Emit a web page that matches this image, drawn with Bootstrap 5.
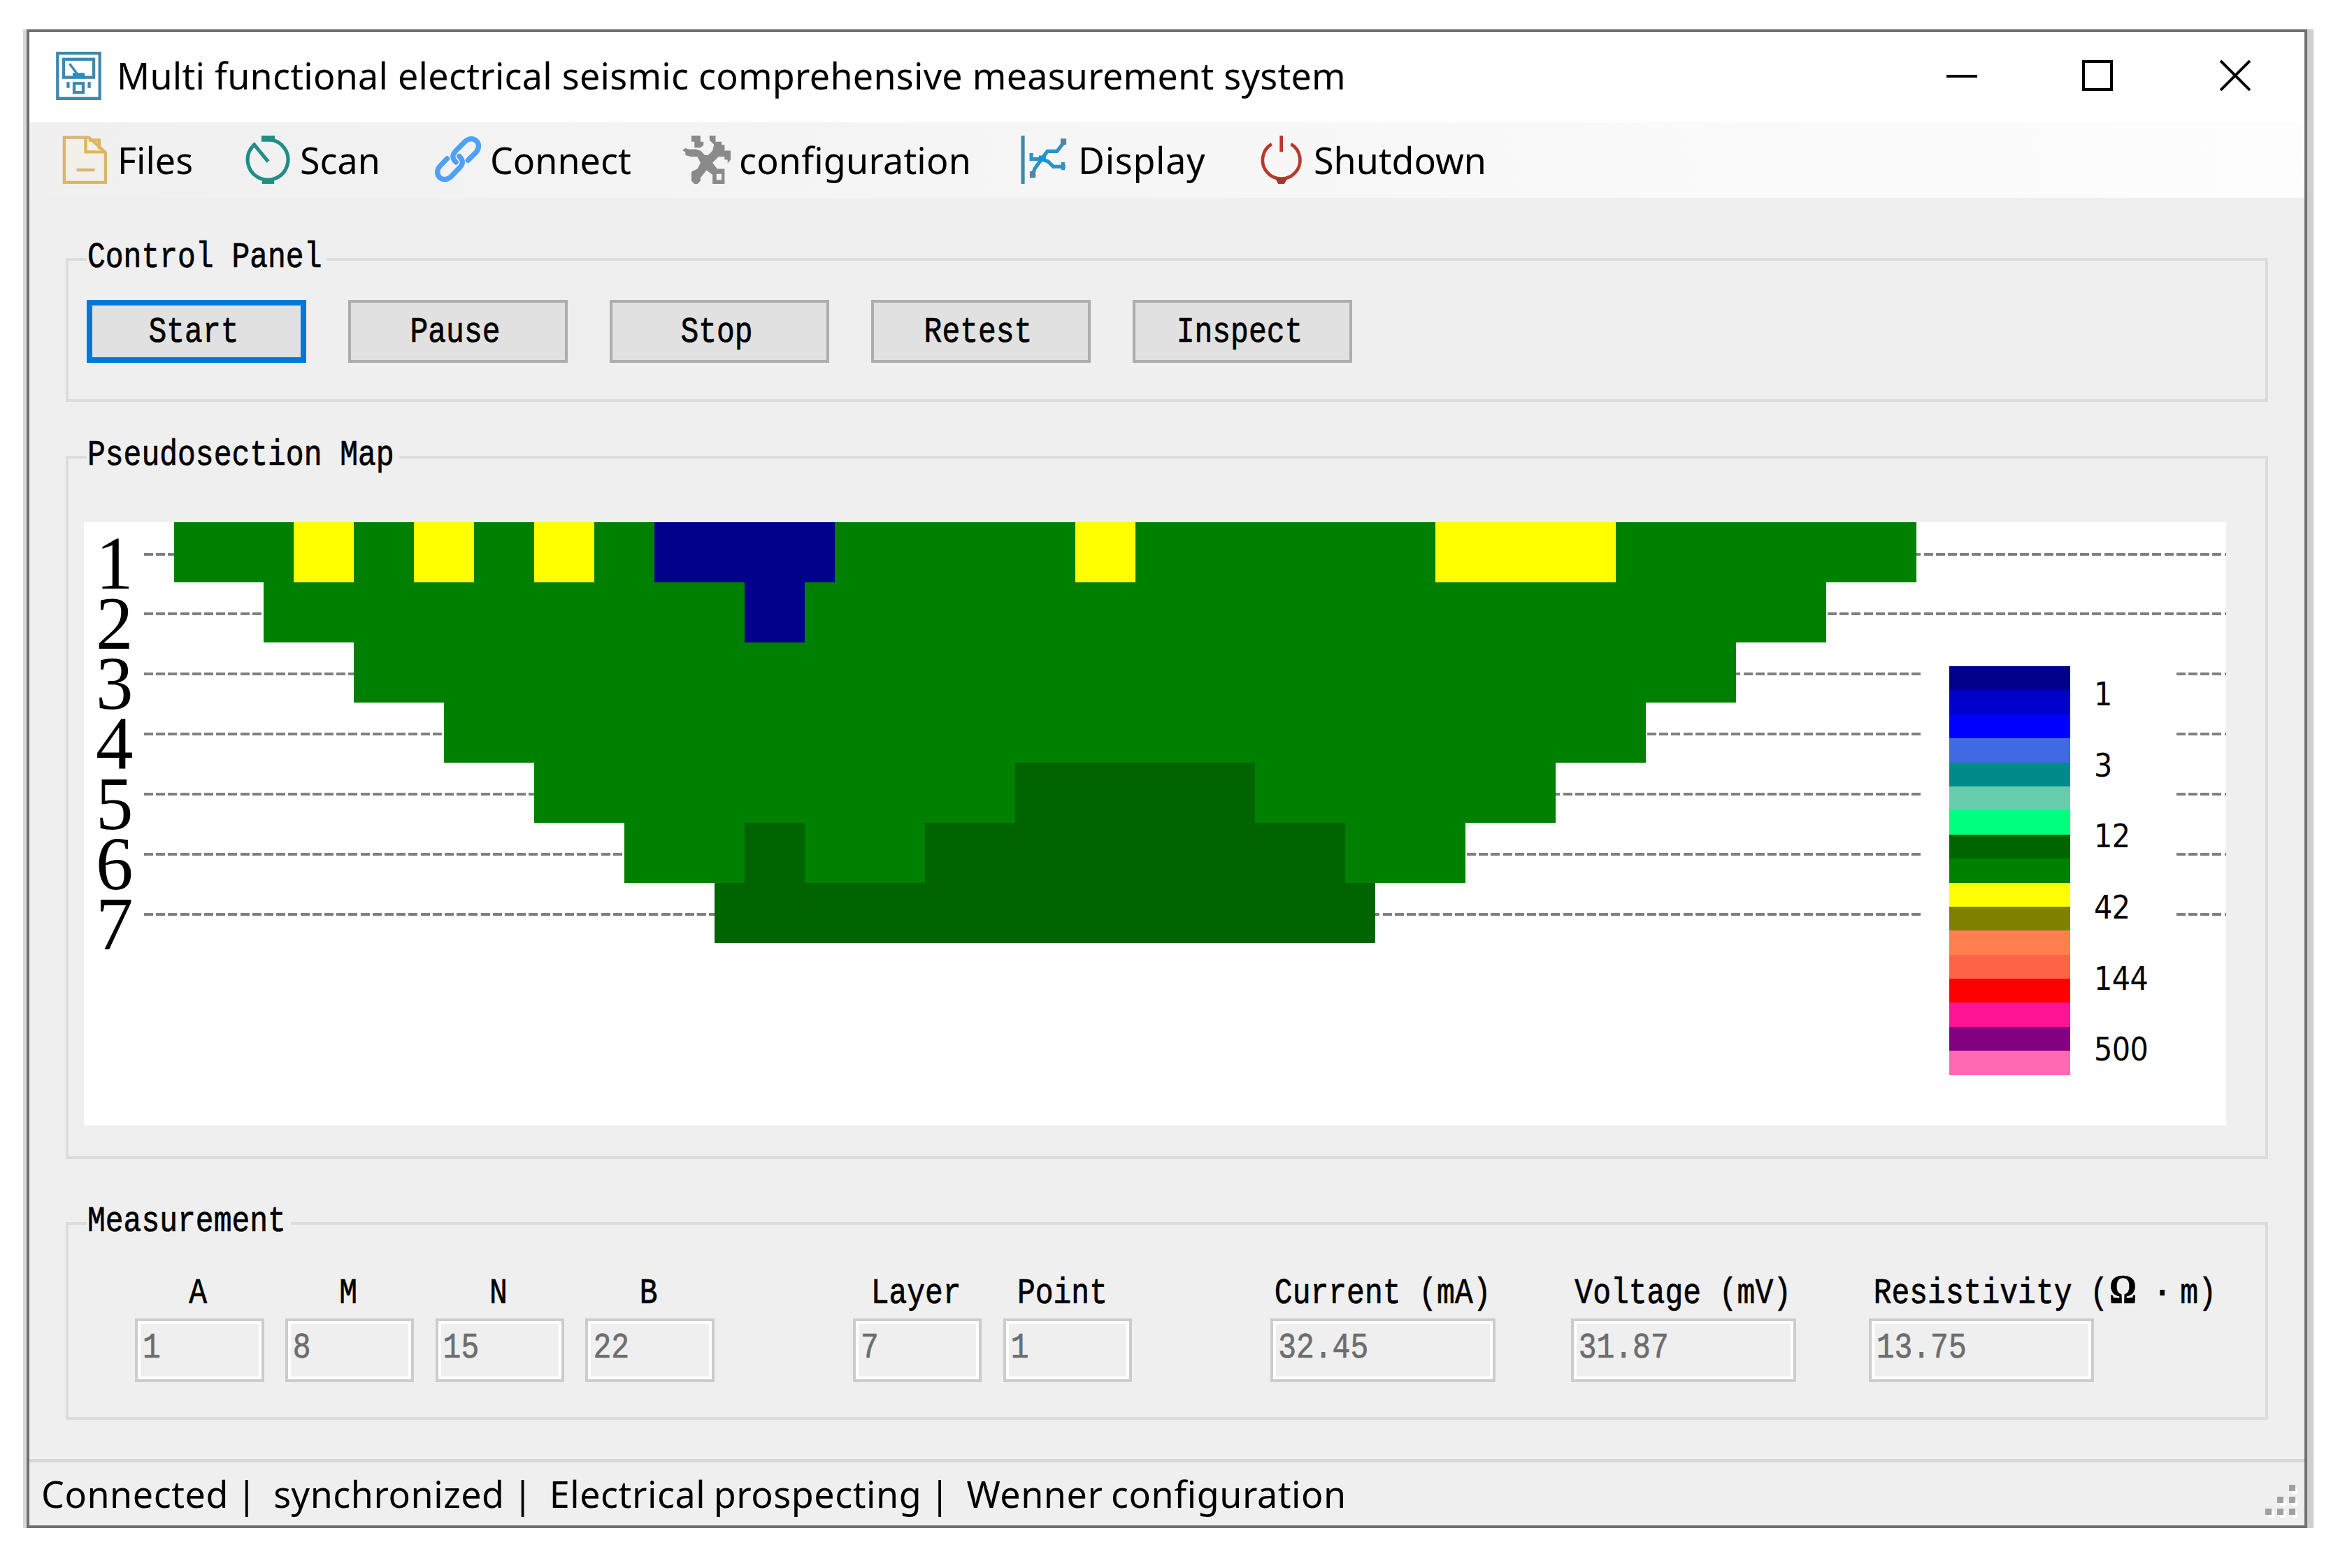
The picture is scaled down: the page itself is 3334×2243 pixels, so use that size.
<!DOCTYPE html>
<html lang="en">
<head>
    <meta charset="UTF-8">
    <meta name="viewport" content="width=device-width, initial-scale=1.0">
    <title>Multi functional electrical seismic comprehensive measurement system</title>
    <link href="https://cdn.jsdelivr.net/npm/bootstrap@5.3.0/dist/css/bootstrap.min.css" rel="stylesheet">
    <style>
        body {
            background-color: #fff;
            color: #000;
            font-family: "Noto Sans", "Open Sans", sans-serif;
            font-size: 52px;
            line-height: 1;
            overflow: hidden;
        }
        .app-window {
            width: 3262px;
            height: 2144px;
            margin: 42px 0 0 38px;
            border: 4px solid #707070;
            background-color: #efefef;
            box-shadow: 9px 0 0 #cfcfcf, -5px 0 0 #d8d8d8, 0 10px 0 #c9c9c9, 9px 10px 0 #d4d4d4, -5px 10px 0 #dedede;
        }
        .title-bar {
            height: 129px;
            padding: 0 77px 5px 36px;
        }
        .title-text {
            margin-left: 20px;
            letter-spacing: 0.27px;
        }
        .window-buttons {
            gap: 150px;
        }
        .window-buttons svg {
            width: 44px;
            height: 44px;
        }
        .window-buttons svg:last-child {
            margin-left: 3px;
        }
        .icon16 {
            width: 69px;
            height: 69px;
            flex: none;
        }
        .tool-bar {
            height: 108px;
            padding-left: 46px;
            background: linear-gradient(to right, #f0f0f0, #fdfdfd);
        }
        .tool-item {
            padding-bottom: 1px;
            white-space: nowrap;
        }
        .tool-item span {
            margin-left: 11px;
        }
        .w-files { width: 261px; }
        .w-scan { width: 272px; }
        .w-connect { width: 355px; }
        .w-config { width: 484px; }
        .w-config span { margin-left: 12px; letter-spacing: 0.2px; }
        .w-display { width: 339px; }
        .w-display span { margin-left: 13px; letter-spacing: 0.7px; }

        /* fixed-width face, stretched vertically */
        .mono {
            display: inline-block;
            vertical-align: top;
            font-family: "Liberation Mono", monospace;
            font-size: 43px;
            line-height: 52px;
            white-space: pre;
            transform: translate(1px, 1px) scaleY(1.22);
            -webkit-text-stroke: 0.6px currentColor;
        }
        .main-area {
            height: 1804px;
            padding: 86px 52px 0 52px;
        }
        .group-box {
            border: 4px solid #dcdcdc;
            margin-bottom: 77px;
        }
        .group-title {
            width: fit-content;
            height: 52px;
            margin: -31px 0 0 26px;
            padding-right: 8px;
            background-color: #efefef;
        }
        .group-control { height: 206px; }
        .group-map { height: 1006px; margin-bottom: 90px; }
        .group-measure { height: 283px; margin-bottom: 0; }
        .button-row {
            gap: 60px;
            margin: 35px 0 0 26px;
        }
        .btn-win {
            width: 314px;
            height: 90px;
            padding: 2px 10px 0 0;
            border: 4px solid #adadad;
            border-radius: 0;
            background-color: #e1e1e1;
            color: #000;
            font-size: 43px;
            line-height: 1;
        }
        .btn-win.is-default {
            border: 8px solid #0078d7;
        }
        .map-canvas {
            width: 3064px;
            height: 863px;
            margin: 70px 0 0 22px;
            background-color: #fff;
        }
        .map-canvas > svg {
            display: block;
        }
        .map-canvas .layer-no {
            font-family: "Liberation Serif", serif;
            font-size: 107px;
        }
        .map-legend {
            left: 2630px;
            top: 190px;
            width: 359px;
            height: 620px;
            padding: 16px 0 0 38px;
            background-color: #fff;
        }
        .legend-band {
            width: 173px;
            height: 34.4px;
        }
        .legend-values {
            margin: 14px 0 0 34px;
            font-family: "DejaVu Sans Condensed", "DejaVu Sans", sans-serif;
            font-stretch: condensed;
            font-size: 46px;
            letter-spacing: -0.6px;
        }
        .legend-values div {
            height: 101.7px;
            line-height: 52px;
        }
        .field-row {
            margin: 51px 0 0 95px;
        }
        .field {
            width: 184.5px;
            margin-right: 30.3px;
        }
        .field-wide {
            width: 322px;
            margin-right: 107.5px;
        }
        .field-wide + .field-wide {
            margin-right: 104px;
        }
        .gap-after { margin-right: 198px; }
        .field-label {
            height: 52px;
            padding-right: 6px;
            margin-bottom: 10px;
            text-align: center;
            white-space: nowrap;
        }
        .field-label.shift { padding-right: 17px; }
        .field-label.near { padding-right: 3px; }
        .field-label.from-start { text-align: left; padding-left: 6px; }
        .wide-char {
            display: inline-block;
            width: 51.6px;
        }
        .omega {
            font-family: "Liberation Serif", serif;
            font-weight: bold;
            font-size: 48px;
            line-height: 40px;
            padding-left: 2px;
        }
        .mid-dot {
            font-weight: bold;
            text-align: center;
        }
        .field-value {
            height: 91px;
            padding: 12px 0 0 6px;
            border: 4px solid #ccc;
            box-shadow: inset 0 0 0 4px #fff;
            color: #6d6d6d;
        }
        .status-strip {
            height: 95px;
            padding: 0 10px 0 17px;
            border-top: 5px solid #d7d7d7;
            white-space: pre;
        }
        .status-text {
            letter-spacing: 0.55px;
            word-spacing: -2.4px;
        }
        .size-grip {
            width: 46px;
            height: 47px;
            margin-top: 20px;
        }
    </style>
</head>
<body>
    <div class="app-window">
        <!-- Title bar -->
        <div class="title-bar bg-white d-flex align-items-center">
            <svg class="icon16" viewBox="0 0 16 16" fill="none" stroke="#3f87ae">
                <rect x="1" y=".5" width="14" height="15"/>
                <rect x="3" y="2.5" width="10" height="6"/>
                <path d="M5 4l3 4" stroke-width=".8"/>
                <path d="M6 7h4v1.500H6z" fill="#1e90c8" stroke="none"/>
                <path d="M4.500 10v2M11.500 10v2"/>
                <rect x="6.500" y="10.500" width="3" height="3"/>
            </svg>
            <span class="title-text">Multi functional electrical seismic comprehensive measurement system</span>
            <div class="window-buttons d-flex ms-auto">
                <svg viewBox="0 0 44 44"><path d="M0 23h44" stroke="#000" stroke-width="4"/></svg>
                <svg viewBox="0 0 44 44"><path d="M2 2h40v40H2z" fill="none" stroke="#000" stroke-width="4"/></svg>
                <svg viewBox="0 0 44 44"><path d="M1 1l42 42M43 1L1 43" stroke="#000" stroke-width="4"/></svg>
            </div>
        </div>

        <!-- Tool bar -->
        <div class="tool-bar d-flex">
            <div class="tool-item w-files d-flex align-items-center">
                <svg class="icon16" viewBox="0 0 16 16" fill="none" stroke="#d9b472">
                    <path d="M.9.6h8.200l5.500 5v9.900H.9z" fill="#f2f0ea"/>
                    <path d="M8 .6v4.800h6.600M9 1.500h3.500v3" stroke="#e2b455"/>
                    <path d="M5 11.400h6"/>
                </svg>
                <span>Files</span>
            </div>
            <div class="tool-item w-scan d-flex align-items-center">
                <svg class="icon16" viewBox="0 0 16 16" fill="none" stroke="#1f8f86" stroke-width="1.200">
                    <path d="M3 3.400A6.700 6.700 0 1 0 8.500 1.300"/>
                    <path d="M5.800 0h4.400v2H5.800zM6 14.300h4V16H6z" fill="#1f8f86" stroke="none"/>
                    <path d="M3 2.500L8 8.600"/>
                </svg>
                <span>Scan</span>
            </div>
            <div class="tool-item w-connect d-flex align-items-center">
                <svg class="icon16" viewBox="0 0 16 16" fill="none" stroke="#4fa0fb" stroke-width="1.700" stroke-linecap="round">
                    <path d="M7.200 8.800C5.400 7 6.400 5.800 7.600 4.600l2.600-2.600c2.800-2.600 6.200.8 3.600 3.600L11.200 8.200"/>
                    <path d="M8.300 6.800c1.800 1.800 1 3-.2 4.200l-2.500 2.600c-2.800 2.600-6.200-.8-3.600-3.600L4.300 7.600"/>
                </svg>
                <span>Connect</span>
            </div>
            <div class="tool-item w-config d-flex align-items-center">
                <svg class="icon16" viewBox="0 0 16 16" fill="#8a8a8a">
                    <path d="M3 0h3v2h1v1.200L6 4H4V2H3zM9 0h2v2h2v1h1v2h2v3l-1 1.200V8h-1V7h-2l-2 2 1.500 2H14v5h-4v-3L8 11.500 6 14v1l-1 1H4l-1-1v-3l2-1 1-2-1-2H3L1 6.500V5.500L0 4.800 1 4.200 2 4.500h2.500L6 5l1.500 1.500h1L10 5l.5-2L9 1.500z"/>
                    <path d="M11.300 12.700h1.700v2h-1.700z" fill="#f4f4f4"/>
                </svg>
                <span>configuration</span>
            </div>
            <div class="tool-item w-display d-flex align-items-center">
                <svg class="icon16" viewBox="0 0 16 16" fill="none" stroke="#2e93c4" stroke-width="1.200">
                    <path d="M.7 0v16" stroke="#4388ab"/>
                    <path d="M3.800 13.500L4.600 11 8.800 5.200H12L14.700 1.800M3.500 5.800v2h3.300l2.300.8 1.700 1.700h4M14 8.800v2.600"/>
                    <path d="M3 11.800h1.900v2.200H3zM13.200 1h1.900v2.100h-1.900z" fill="#5a829c" stroke="none"/>
                    <path d="M6 6.600h2.300v2H6z" fill="#1296db" stroke="none"/>
                </svg>
                <span>Display</span>
            </div>
            <div class="tool-item d-flex align-items-center">
                <svg class="icon16" viewBox="0 0 16 16" fill="none" stroke="#b93a2a" stroke-width="1.100">
                    <path d="M4.600 2.800A6.200 6.200 0 1 0 11 2.800"/>
                    <path d="M7.800 0v5.400"/>
                    <path d="M5.800 14.200h4l-1 1.800h-2z" fill="#9c392b" stroke="none"/>
                </svg>
                <span>Shutdown</span>
            </div>
        </div>

        <div class="main-area">
            <!-- Control Panel -->
            <div class="group-box group-control">
                <div class="group-title"><span class="mono">Control Panel</span></div>
                <div class="button-row d-flex">
                    <button class="btn btn-win is-default"><span class="mono">Start</span></button>
                    <button class="btn btn-win"><span class="mono">Pause</span></button>
                    <button class="btn btn-win"><span class="mono">Stop</span></button>
                    <button class="btn btn-win"><span class="mono">Retest</span></button>
                    <button class="btn btn-win"><span class="mono">Inspect</span></button>
                </div>
            </div>

            <!-- Pseudosection Map -->
            <div class="group-box group-map">
                <div class="group-title"><span class="mono">Pseudosection Map</span></div>
                <div class="map-canvas position-relative">
                    <svg id="sectionMap" width="3064" height="863" shape-rendering="crispEdges"></svg>
                    <div class="map-legend position-absolute d-flex">
                        <div id="legendBands"></div>
                        <div class="legend-values">
                            <div>1</div>
                            <div>3</div>
                            <div>12</div>
                            <div>42</div>
                            <div>144</div>
                            <div>500</div>
                        </div>
                    </div>
                </div>
            </div>

            <!-- Measurement -->
            <div class="group-box group-measure">
                <div class="group-title"><span class="mono">Measurement</span></div>
                <div class="field-row d-flex">
                    <div class="field">
                        <div class="field-label"><span class="mono">A</span></div>
                        <div class="field-value"><span class="mono">1</span></div>
                    </div>
                    <div class="field">
                        <div class="field-label"><span class="mono">M</span></div>
                        <div class="field-value"><span class="mono">8</span></div>
                    </div>
                    <div class="field">
                        <div class="field-label"><span class="mono">N</span></div>
                        <div class="field-value"><span class="mono">15</span></div>
                    </div>
                    <div class="field gap-after">
                        <div class="field-label"><span class="mono">B</span></div>
                        <div class="field-value"><span class="mono">22</span></div>
                    </div>
                    <div class="field">
                        <div class="field-label"><span class="mono">Layer</span></div>
                        <div class="field-value"><span class="mono">7</span></div>
                    </div>
                    <div class="field gap-after">
                        <div class="field-label shift"><span class="mono">Point</span></div>
                        <div class="field-value"><span class="mono">1</span></div>
                    </div>
                    <div class="field-wide">
                        <div class="field-label near"><span class="mono">Current (mA)</span></div>
                        <div class="field-value"><span class="mono">32.45</span></div>
                    </div>
                    <div class="field-wide">
                        <div class="field-label near"><span class="mono">Voltage (mV)</span></div>
                        <div class="field-value"><span class="mono">31.87</span></div>
                    </div>
                    <div class="field-wide me-0">
                        <div class="field-label from-start"><span class="mono">Resistivity (<span class="wide-char omega">Ω</span><span class="wide-char mid-dot">·</span>m)</span></div>
                        <div class="field-value"><span class="mono">13.75</span></div>
                    </div>
                </div>
            </div>
        </div>

        <!-- Status bar -->
        <div class="status-strip d-flex align-items-center">
            <span class="status-text">Connected |  synchronized |  Electrical prospecting |  Wenner configuration</span>
            <svg class="size-grip ms-auto" viewBox="0 0 46 47">
                <path d="M38 4h9v9h-9zM21 21h9v9h-9zM38 21h9v9h-9zM4 38h9v9H4zM21 38h9v9h-9zM38 38h9v9h-9z" fill="#fff"/>
                <path d="M34 0h9v9h-9zM17 17h9v9h-9zM34 17h9v9h-9zM0 34h9v9H0zM17 34h9v9h-9zM34 34h9v9h-9z" fill="#a0a0a0"/>
            </svg>
        </div>
    </div>

    <script src="https://cdn.jsdelivr.net/npm/bootstrap@5.3.0/dist/js/bootstrap.bundle.min.js"></script>
    <script>
        const sectionMap = document.getElementById('sectionMap');
        const legendBands = document.getElementById('legendBands');

        const cell = 85.94;
        const originX = 128.5;
        const green = '#008000';
        const darkGreen = '#006400';
        const yellow = '#ffff00';
        const navy = '#00008b';

        // [first cell, last cell, colour] on top of the base colour of each layer
        const layers = [
            { count: 29, base: green, marks: [[2, 2, yellow], [4, 4, yellow], [6, 6, yellow], [8, 10, navy], [15, 15, yellow], [21, 23, yellow]] },
            { count: 26, base: green, marks: [[8, 8, navy]] },
            { count: 23, base: green, marks: [] },
            { count: 20, base: green, marks: [] },
            { count: 17, base: green, marks: [[8, 11, darkGreen]] },
            { count: 14, base: green, marks: [[2, 2, darkGreen], [5, 11, darkGreen]] },
            { count: 11, base: darkGreen, marks: [] }
        ];

        const bandColors = [
            '#00008b', '#0000cd', '#0000ff', '#4169e1', '#008b8b', '#66cdaa', '#00ff7f', '#006400', '#008000',
            '#ffff00', '#808000', '#ff7f50', '#ff6347', '#ff0000', '#ff1493', '#800080', '#ff69b4'
        ];

        function addShape(name, attrs, text) {
            const el = document.createElementNS('http://www.w3.org/2000/svg', name);
            for (const key in attrs) {
                el.setAttribute(key, attrs[key]);
            }
            if (text) {
                el.textContent = text;
            }
            sectionMap.appendChild(el);
        }

        function drawMap() {
            layers.forEach((layer, i) => {
                const y = i * cell;
                const x = originX + i * cell * 1.5;
                addShape('line', { x1: 86, y1: y + 45.5, x2: 3064, y2: y + 45.5, stroke: '#808080', 'stroke-width': 4, 'stroke-dasharray': '13 4.2' });
                addShape('rect', { x: x, y: y, width: layer.count * cell, height: cell, fill: layer.base });
                layer.marks.forEach(([from, to, color]) => {
                    addShape('rect', { x: x + from * cell, y: y, width: (to - from + 1) * cell, height: cell, fill: color });
                });
                addShape('text', { x: 17, y: y + 95, class: 'layer-no' }, String(i + 1));
            });
        }

        function drawLegend() {
            bandColors.forEach(color => {
                const band = document.createElement('div');
                band.className = 'legend-band';
                band.style.backgroundColor = color;
                legendBands.appendChild(band);
            });
        }

        drawMap();
        drawLegend();
    </script>
</body>
</html>
